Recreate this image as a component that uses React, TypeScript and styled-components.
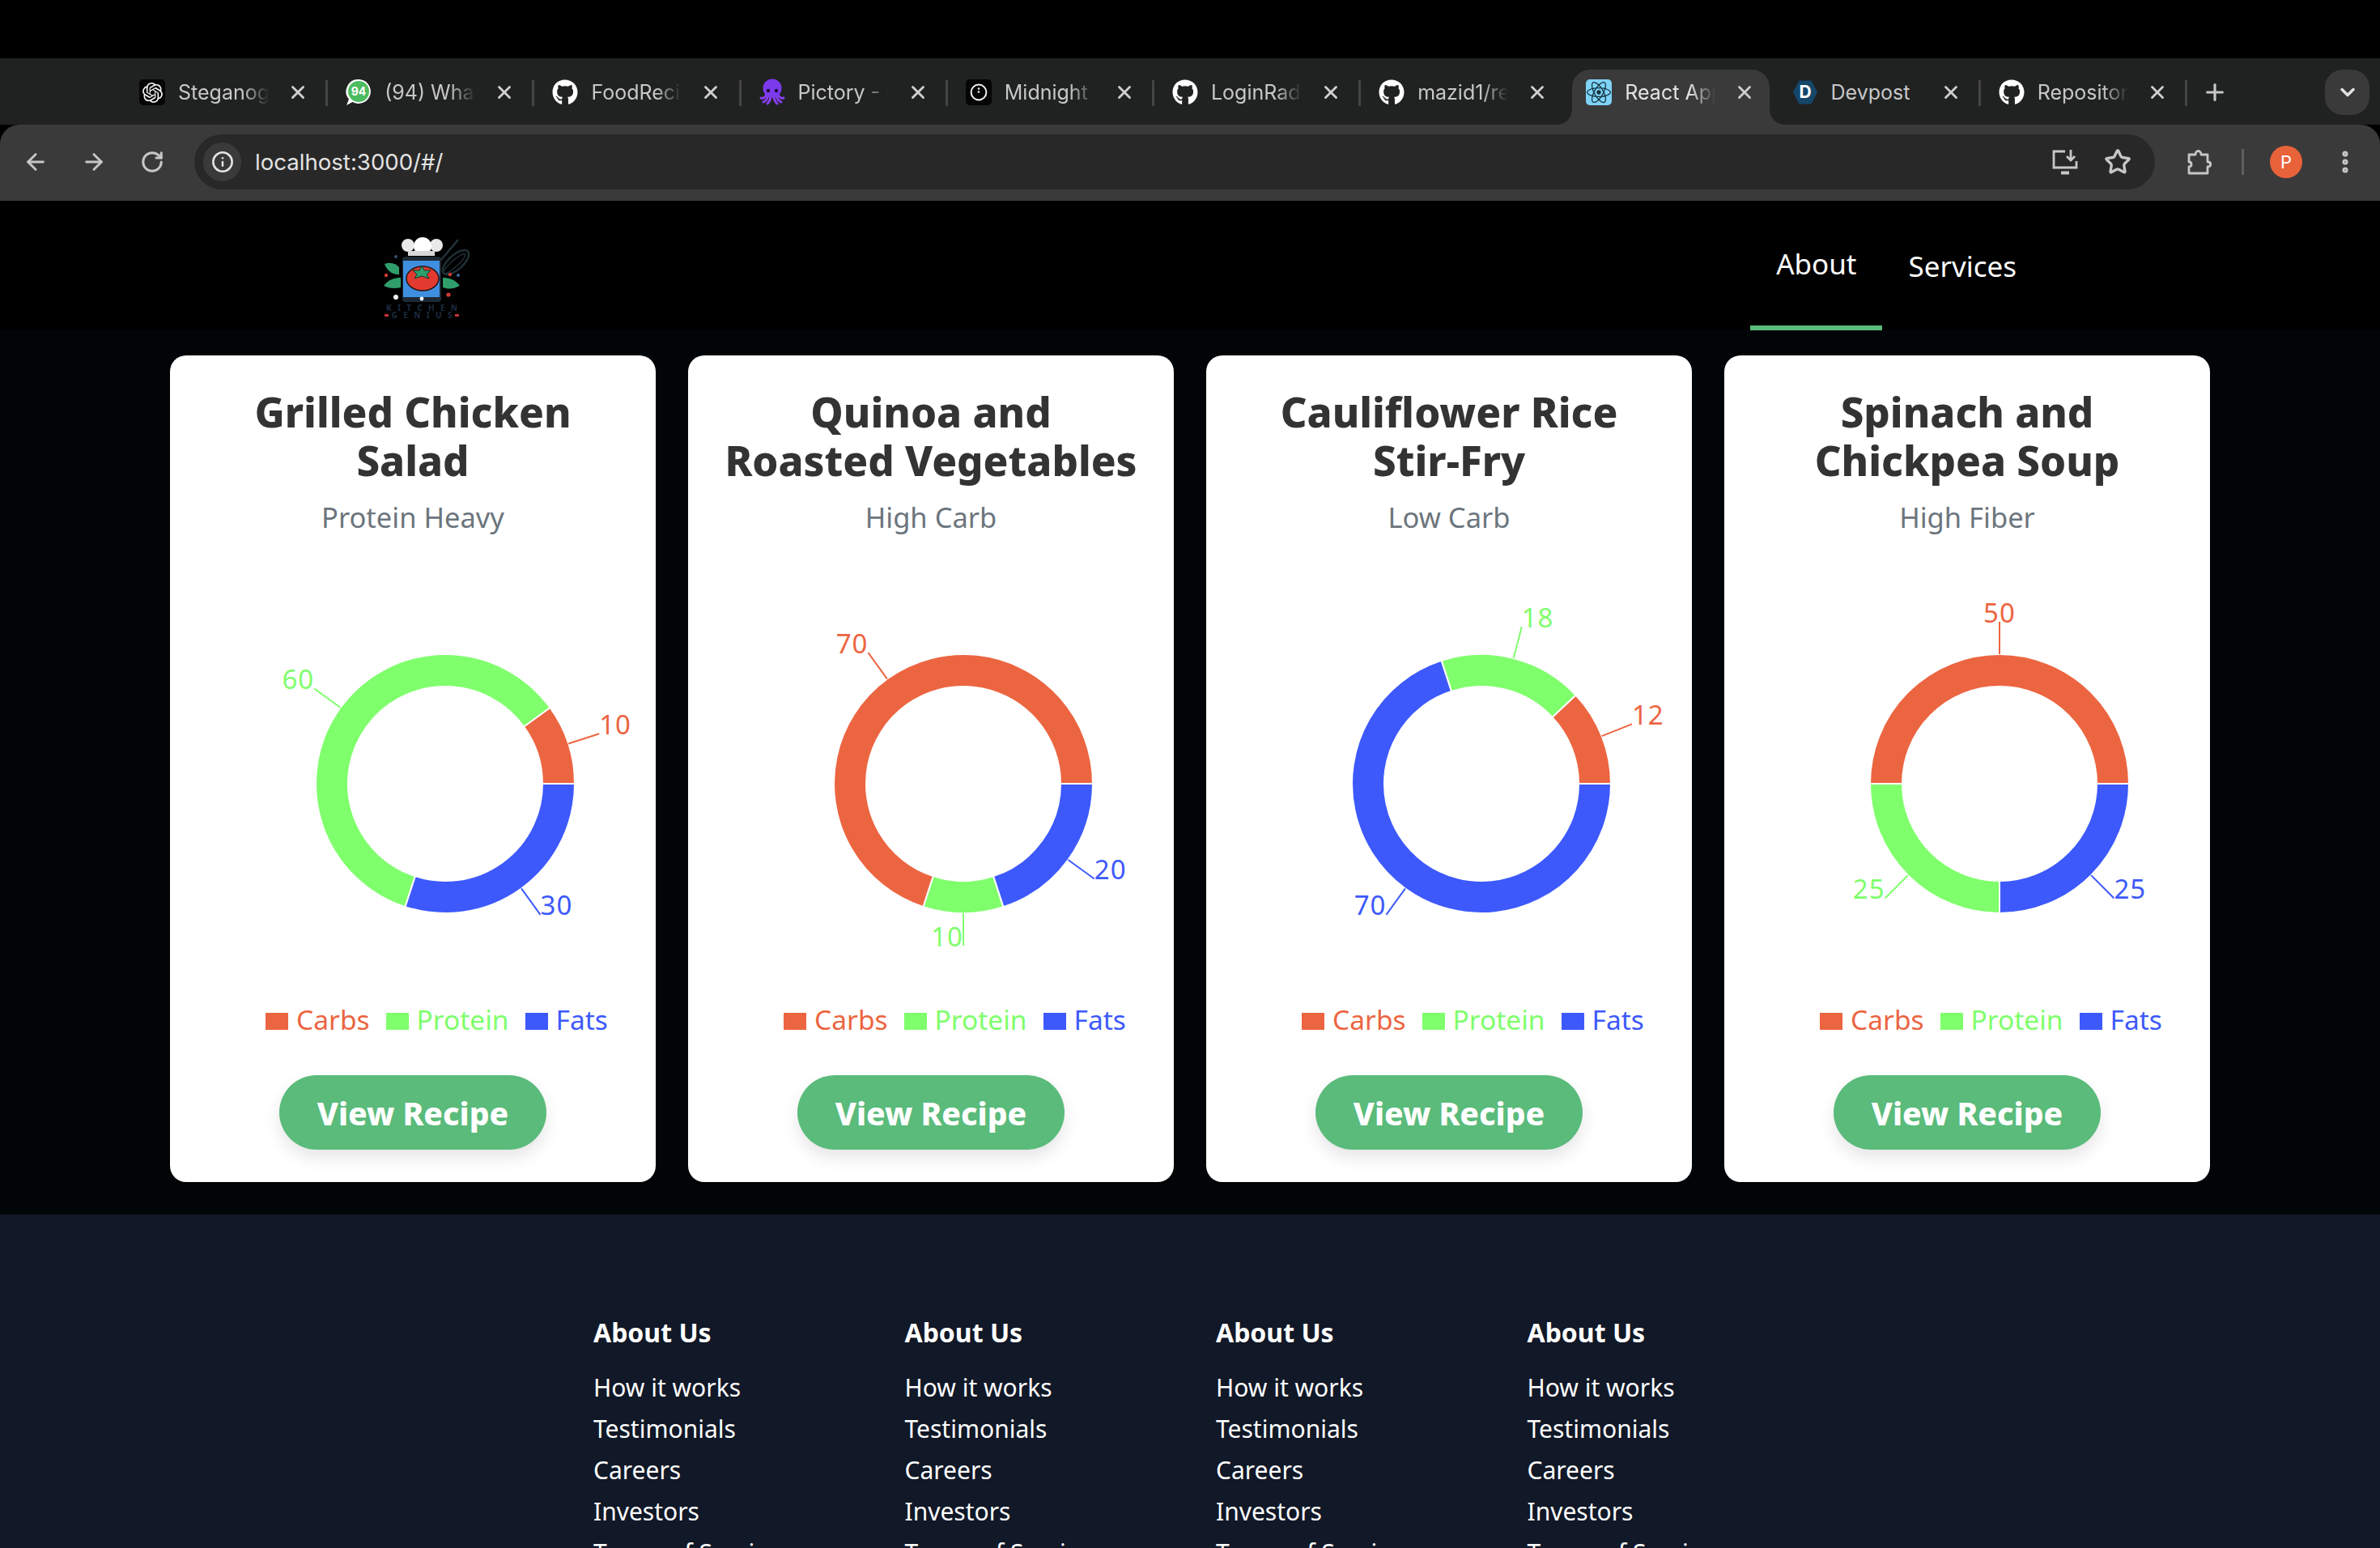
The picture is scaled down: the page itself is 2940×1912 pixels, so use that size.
import * as React from 'react';
import styled, { createGlobalStyle } from 'styled-components';
import { ArrowLeft, ArrowRight, ChevronDown, Info, MoreVertical, Plus, RotateCw, Star, X } from 'lucide-react';
import { FaGithub, FaReact } from 'react-icons/fa';
import { SiOpenai } from 'react-icons/si';

const CARBS = '#ec6541';
const PROTEIN = '#7fff6c';
const FATS = '#3d59fb';

const recipes = [
    { title: 'Grilled Chicken Salad', kind: 'Protein Heavy', carbs: 10, protein: 60, fats: 30 },
    { title: 'Quinoa and Roasted Vegetables', kind: 'High Carb', carbs: 70, protein: 10, fats: 20 },
    { title: 'Cauliflower Rice Stir-Fry', kind: 'Low Carb', carbs: 12, protein: 18, fats: 70 },
    { title: 'Spinach and Chickpea Soup', kind: 'High Fiber', carbs: 50, protein: 25, fats: 25 },
];

const footerLinks = ['How it works', 'Testimonials', 'Careers', 'Investors', 'Terms of Service'];

const WhatsappIcon = () => (
    <svg width="32" height="34" viewBox="0 0 32 34">
        <path d="M16 1a15 15 0 1 1-7.6 28L1 33l3-7.4A15 15 0 0 1 16 1z" fill="#fff" />
        <circle cx="16" cy="16" r="13" fill="#4dbb5f" />
        <WhatsappCount x="16" y="21">94</WhatsappCount>
    </svg>
);

const OctopusIcon = () => (
    <svg width="32" height="34" viewBox="0 0 32 34">
        <g fill="none" stroke="#8a3ff2" strokeWidth="3" strokeLinecap="round">
            <path d="M9 19c-1 4-4 6-7 5" />
            <path d="M11 21c-1 4-3 7-6 8" />
            <path d="M14 22c0 4-2 7-4 9" />
            <path d="M18 22c0 4 2 7 4 9" />
            <path d="M21 21c1 4 3 7 6 8" />
            <path d="M23 19c1 4 4 6 7 5" />
        </g>
        <circle cx="16" cy="12" r="11.500" fill="#7c3aed" />
        <circle cx="11" cy="15" r="2.200" fill="#1d0b3a" />
        <circle cx="21" cy="15" r="2.200" fill="#1d0b3a" />
    </svg>
);

const MidnightIcon = () => (
    <IconTile $bg="#050505">
        <svg width="22" height="22" viewBox="0 0 22 22">
            <circle cx="11" cy="11" r="9.400" fill="none" stroke="#f2f2f2" strokeWidth="2" />
            <circle cx="11" cy="6.500" r="1.300" fill="#f2f2f2" />
            <circle cx="11" cy="10.500" r="1.300" fill="#f2f2f2" />
        </svg>
    </IconTile>
);

const DevpostIcon = () => (
    <svg width="32" height="32" viewBox="0 0 32 32">
        <path d="M8.500 1.500h15L31 16l-7.500 14.500h-15L1 16z" fill="#15476b" />
        <DevpostLetter x="16" y="23">D</DevpostLetter>
    </svg>
);

const ExtensionIcon = () => (
    <svg width="32" height="34" viewBox="0 0 32 34" fill="none" stroke="#c7c7c7" strokeWidth="2.800" strokeLinejoin="round">
        <path d="M3 8h8c0-6 7-6 7 0h8v9c5 0 5 6 0 6v8H3v-8c4 0 4-6 0-6z" />
    </svg>
);

const InstallIcon = () => (
    <svg width="34" height="32" viewBox="0 0 34 32" fill="none" stroke="#c7c7c7" strokeWidth="2.800">
        <path d="M17 3H3v20h28v-8" />
        <path d="M12 29.500h10" strokeWidth="4" />
        <path d="M24 1v12M19 9l5 5 5-5" />
    </svg>
);

function IconTileOpenai() {
    return (
        <IconTile $bg="#050505">
            <SiOpenai size={25} color="#f4f4f4" />
        </IconTile>
    );
}

function IconTileReact() {
    return (
        <IconTile $bg="#7fd3f7">
            <FaReact size={30} color="#12323f" />
        </IconTile>
    );
}

const tabs: Array<{ name: string, icon: React.ReactNode, active?: boolean, noSep?: boolean, noFade?: boolean }> = [
    { name: 'Steganography', icon: <IconTileOpenai /> },
    { name: '(94) WhatsApp', icon: <WhatsappIcon /> },
    { name: 'FoodRecipes', icon: <FaGithub size={32} color="#fff" /> },
    { name: 'Pictory - Edit', icon: <OctopusIcon /> },
    { name: 'Midnight | Blog', icon: <MidnightIcon /> },
    { name: 'LoginRadius', icon: <FaGithub size={32} color="#fff" /> },
    { name: 'mazid1/react', icon: <FaGithub size={32} color="#fff" />, noSep: true },
    { name: 'React App', icon: <IconTileReact />, active: true, noSep: true },
    { name: 'Devpost', icon: <DevpostIcon />, noFade: true },
    { name: 'Repositories', icon: <FaGithub size={32} color="#fff" /> },
];

const Logo = () => (
    <LogoSvg viewBox="0 0 240 160" width="240" height="160">
        <path d="M124 62 L146 36" stroke="#23323a" strokeWidth="2.500" fill="none" />
        <ellipse cx="143" cy="64" rx="9" ry="20" transform="rotate(48 143 64)" fill="none" stroke="#1f3036" strokeWidth="2.500" />
        <ellipse cx="141" cy="66" rx="4" ry="18" transform="rotate(48 141 66)" fill="none" stroke="#1f3036" strokeWidth="1.500" />
        <circle cx="84" cy="43" r="8" fill="#e9e9e9" />
        <circle cx="119" cy="43" r="8" fill="#e9e9e9" />
        <circle cx="102" cy="44" r="11" fill="#fff" />
        <rect x="84" y="50" width="33" height="6" fill="#d8d8d8" />
        <rect x="77" y="57" width="48" height="56" rx="4" fill="#1d2a33" />
        <rect x="78" y="62" width="45" height="45" fill="#3f8fe0" />
        <ellipse cx="102" cy="84" rx="20" ry="15" fill="#e23a30" stroke="#2a1512" strokeWidth="1.500" />
        <path d="M101 68l3 6 8 0-5 5 3 5-9-3-9 3 3-5-5-5 8 0z" fill="#2f9e6b" stroke="#14342a" strokeWidth="1" />
        <circle cx="101" cy="109" r="2.400" fill="#fff" />
        <path d="M55 66c8-3 14 0 18 4v9c-8 1-15-5-18-13z" fill="#2f9e6b" />
        <path d="M54 93c6-8 14-10 21-10v12c-8 2-15 1-21-2z" fill="#2f9e6b" />
        <path d="M148 93c-6-8-14-10-21-10v12c9 3 15 1 21-2z" fill="#2f9e6b" />
        <circle cx="57" cy="80" r="2.200" fill="#d23a35" />
        <circle cx="136" cy="79" r="2.200" fill="#d23a35" />
        <circle cx="146" cy="80" r="2" fill="#3a6aa0" />
        <circle cx="69" cy="57" r="2" fill="#35506e" />
        <circle cx="69" cy="107" r="3" fill="#f2f2f2" />
        <circle cx="134" cy="104" r="2.600" fill="#d23a35" />
        <LogoWord x="101" y="124" textLength="88" lengthAdjust="spacing">KITCHEN</LogoWord>
        <LogoWord x="101" y="133" textLength="75" lengthAdjust="spacing">GENIUS</LogoWord>
        <rect x="55" y="128" width="5" height="3" fill="#c8323a" />
        <rect x="142" y="128" width="5" height="3" fill="#c8323a" />
    </LogoSvg>
);

type ChartProps = { carbs: number; protein: number; fats: number };

const CX = 340;
const CY = 304;

const polar = (r: number, deg: number) => {
    const rad = (deg * Math.PI) / 180;
    return { x: CX + r * Math.cos(rad), y: CY - r * Math.sin(rad) };
};

const Donut = ({ carbs, protein, fats }: ChartProps) => {
    const slices = [
        { value: carbs, color: CARBS },
        { value: protein, color: PROTEIN },
        { value: fats, color: FATS },
    ];
    let angle = 0;

    return (
        <ChartSvg width="600" height="546" viewBox="0 0 600 546">
            {slices.map(({ value, color }) => {
                const from = angle;
                const to = angle + value * 3.6;
                angle = to;
                const mid = (from + to) / 2;
                const large = to - from > 180 ? 1 : 0;
                const a = polar(160, from);
                const b = polar(160, to);
                const c = polar(120, to);
                const d = polar(120, from);
                const start = polar(160, mid);
                const end = polar(200, mid);
                const anchor = Math.abs(mid - 90) < 0.01 ? 'middle' : end.x > CX ? 'start' : 'end';
                return (
                    <g key={color}>
                        <path
                            d={`M${a.x} ${a.y}A160 160 0 ${large} 0 ${b.x} ${b.y}L${c.x} ${c.y}A120 120 0 ${large} 1 ${d.x} ${d.y}Z`}
                            fill={color}
                            stroke="#fff"
                            strokeWidth="2"
                        />
                        <line x1={start.x} y1={start.y} x2={end.x} y2={end.y} stroke={color} strokeWidth="2" />
                        <SliceLabel x={end.x} y={end.y - 12} fill={color} textAnchor={anchor}>{value}</SliceLabel>
                    </g>
                );
            })}
        </ChartSvg>
    );
};

const App = () => {
    return (
        <>
            <GlobalStyle />
            <Screen>
                <MacBar />
                <TabStrip>
                    {tabs.map(tab => (
                        <Tab key={tab.name} $active={tab.active} $noSep={tab.noSep}>
                            <TabIcon>{tab.icon}</TabIcon>
                            <TabTitle $active={tab.active} $noFade={tab.noFade}>{tab.name}</TabTitle>
                            <TabClose><X size={26} strokeWidth={2.6} /></TabClose>
                        </Tab>
                    ))}
                    <NewTab><Plus size={32} strokeWidth={2.4} /></NewTab>
                    <TabSearch><ChevronDown size={28} strokeWidth={3} /></TabSearch>
                </TabStrip>
                <Toolbar>
                    <NavButton><ArrowLeft size={32} strokeWidth={2.2} /></NavButton>
                    <NavButton><ArrowRight size={32} strokeWidth={2.2} /></NavButton>
                    <NavButton><RotateCw size={30} strokeWidth={2.4} /></NavButton>
                    <AddressBar>
                        <SiteChip><Info size={28} strokeWidth={2.2} /></SiteChip>
                        <Url>localhost:3000/#/</Url>
                        <AddressActions>
                            <InstallIcon />
                            <Star size={34} strokeWidth={2.4} />
                        </AddressActions>
                    </AddressBar>
                    <ExtensionSlot><ExtensionIcon /></ExtensionSlot>
                    <ToolbarDivider />
                    <Avatar>P</Avatar>
                    <MenuSlot><MoreVertical size={34} strokeWidth={3} /></MenuSlot>
                </Toolbar>

                <Header>
                    <Logo />
                    <Nav>
                        <NavItem $active>About</NavItem>
                        <NavItem>Services</NavItem>
                    </Nav>
                </Header>

                <Main>
                    {recipes.map(recipe => (
                        <Card key={recipe.title}>
                            <Title>{recipe.title}</Title>
                            <Kind>{recipe.kind}</Kind>
                            <Donut carbs={recipe.carbs} protein={recipe.protein} fats={recipe.fats} />
                            <Legend>
                                <LegendItem $color={CARBS}><Swatch $color={CARBS} />Carbs</LegendItem>
                                <LegendItem $color={PROTEIN}><Swatch $color={PROTEIN} />Protein</LegendItem>
                                <LegendItem $color={FATS}><Swatch $color={FATS} />Fats</LegendItem>
                            </Legend>
                            <ViewButton>View Recipe</ViewButton>
                        </Card>
                    ))}
                </Main>

                <Footer>
                    {[0, 1, 2, 3].map(column => (
                        <FooterColumn key={column}>
                            <FooterHeading>About Us</FooterHeading>
                            {footerLinks.map(link => <FooterLink key={link}>{link}</FooterLink>)}
                        </FooterColumn>
                    ))}
                </Footer>
            </Screen>
        </>
    );
};

export default App;

const GlobalStyle = createGlobalStyle`
  html, body {
    margin: 0;
    height: 1912px;
    overflow: hidden;
    background: #000;
  }
  * { box-sizing: border-box; }
`;

const Screen = styled.div`
  width: 2940px;
  height: 1912px;
  overflow: hidden;
  font-family: "Noto Sans", "Open Sans", sans-serif;
`;

const MacBar = styled.div`
  height: 72px;
  background: #000;
`;

const TabStrip = styled.div`
  height: 82px;
  background: #202222;
  display: flex;
  align-items: flex-end;
  padding-left: 150px;
  font-family: Inter, "Liberation Sans", sans-serif;
`;

const Tab = styled.div<{ $active?: boolean; $noSep?: boolean }>`
  position: relative;
  width: ${p => (p.$active ? '243.200px' : '255.200px')};
  height: 68px;
  margin: ${p => (p.$active ? '0 6px' : '0')};
  padding: 0 0 12px ${p => (p.$active ? '17px' : '22px')};
  display: flex;
  align-items: center;
  flex-shrink: 0;
  border-radius: 22px 22px 0 0;
  background: ${p => (p.$active ? '#3a3a3a' : 'transparent')};

  &::after {
    content: '';
    display: ${p => (p.$noSep ? 'none' : 'block')};
    position: absolute;
    right: 0;
    top: 13px;
    width: 3px;
    height: 32px;
    background: #444;
  }
  ${p => p.$active && `
    &::before {
      content: '';
      position: absolute;
      left: -18px;
      right: -18px;
      bottom: 0;
      height: 18px;
      background:
        radial-gradient(circle at 0 0, #202222 17.500px, #3a3a3a 18px) left bottom / 18px 18px no-repeat,
        radial-gradient(circle at 100% 0, #202222 17.500px, #3a3a3a 18px) right bottom / 18px 18px no-repeat;
    }
  `}
`;

const TabIcon = styled.div`
  width: 32px;
  height: 34px;
  display: flex;
  align-items: center;
  justify-content: center;
  flex-shrink: 0;
`;

const IconTile = styled.div<{ $bg: string }>`
  width: 32px;
  height: 32px;
  border-radius: 5px;
  background: ${p => p.$bg};
  display: flex;
  align-items: center;
  justify-content: center;
`;

const TabTitle = styled.div<{ $active?: boolean; $noFade?: boolean }>`
  width: 112px;
  margin-left: 16px;
  white-space: nowrap;
  overflow: hidden;
  font-size: 25px;
  color: ${p => (p.$active ? '#e3e3e3' : '#c7c7c7')};
  ${p => !p.$noFade && `
    mask-image: linear-gradient(to right, #000 72%, transparent 100%);
  `}
`;

const TabClose = styled.div`
  margin-left: 23px;
  display: flex;
  color: #d0d0d0;
`;

const NewTab = styled.div`
  margin: 0 0 24px 18px;
  display: flex;
  color: #c7c7c7;
`;

const TabSearch = styled.div`
  width: 55px;
  height: 56px;
  margin: 0 13px 12px auto;
  border-radius: 22px;
  background: #3a3a3a;
  color: #e3e3e3;
  display: flex;
  align-items: center;
  justify-content: center;
`;

const Toolbar = styled.div`
  height: 94px;
  background: #3a3a3a;
  border-radius: 24px 24px 0 0;
  display: flex;
  align-items: center;
  padding: 0 0 2px 8px;
  color: #c7c7c7;
  font-family: Inter, "Liberation Sans", sans-serif;
`;

const NavButton = styled.div`
  width: 72px;
  display: flex;
  justify-content: center;
`;

const AddressBar = styled.div`
  width: 2422px;
  height: 68px;
  margin-left: 16px;
  padding: 0 29px 0 11px;
  border-radius: 34px;
  background: #282828;
  display: flex;
  align-items: center;
`;

const SiteChip = styled.div`
  width: 47px;
  height: 48px;
  border-radius: 24px;
  background: #3a3a3a;
  color: #e3e3e3;
  display: flex;
  align-items: center;
  justify-content: center;
`;

const Url = styled.div`
  margin-left: 17px;
  font-size: 27.600px;
  color: #e3e3e3;
`;

const AddressActions = styled.div`
  margin-left: auto;
  display: flex;
  align-items: center;
  gap: 31px;
`;

const ExtensionSlot = styled.div`
  margin-left: 39px;
  display: flex;
`;

const ToolbarDivider = styled.div`
  width: 3px;
  height: 32px;
  margin-left: 36px;
  background: #5e5e5e;
`;

const Avatar = styled.div`
  width: 40px;
  height: 40px;
  margin-left: 32px;
  border-radius: 50%;
  background: #e8623a;
  color: #fff;
  font-size: 22px;
  display: flex;
  align-items: center;
  justify-content: center;
`;

const MenuSlot = styled.div`
  margin-left: 36px;
  display: flex;
`;

const Header = styled.header`
  height: 160px;
  background: #000;
  display: flex;
  justify-content: space-between;
  padding: 12px 417px 0 420px;
`;

const LogoSvg = styled.svg`
  display: block;
`;

const LogoWord = styled.text`
  font-size: 10px;
  font-weight: 700;
  text-anchor: middle;
  fill: #1b2c40;
`;

const WhatsappCount = styled.text`
  font-size: 14px;
  font-weight: 700;
  text-anchor: middle;
  fill: #fff;
`;

const DevpostLetter = styled.text`
  font-size: 21px;
  font-weight: 700;
  text-anchor: middle;
  fill: #fff;
`;

const Nav = styled.nav`
  display: flex;
  height: 148px;
`;

const NavItem = styled.div<{ $active?: boolean }>`
  padding: 0 32px 12px;
  display: flex;
  align-items: center;
  font-size: 35px;
  color: #fff;
  border-bottom: ${p => (p.$active ? '6px solid #5abb7b' : 'none')};
`;

const Main = styled.main`
  background: #020507;
  padding: 31px 0 40px;
  display: flex;
  justify-content: center;
  gap: 40px;
`;

const Card = styled.article`
  width: 600px;
  height: 1021px;
  padding-top: 39px;
  background: #fff;
  border-radius: 20px;
  display: flex;
  flex-direction: column;
  align-items: center;
`;

const Title = styled.h3`
  margin: 0;
  padding: 0 44px;
  font-size: 51px;
  line-height: 60px;
  font-weight: 800;
  color: #333;
  text-align: center;
`;

const Kind = styled.p`
  margin: 16px 0 0;
  font-size: 34.500px;
  line-height: 50px;
  color: #6c757d;
`;

const ChartSvg = styled.svg`
  display: block;
  flex-shrink: 0;
`;

const SliceLabel = styled.text`
  font-size: 33px;
  font-weight: 400;
  letter-spacing: 1px;
  dominant-baseline: central;
`;

const Legend = styled.div`
  margin-top: 24px;
  padding-left: 59px;
  display: flex;
  gap: 20px;
`;

const LegendItem = styled.div<{ $color: string }>`
  display: flex;
  align-items: center;
  gap: 10px;
  font-size: 33.500px;
  line-height: 50px;
  color: ${p => p.$color};
`;

const Swatch = styled.span<{ $color: string }>`
  width: 28px;
  height: 21px;
  margin-top: 4px;
  background: ${p => p.$color};
`;

const ViewButton = styled.button`
  width: 330px;
  height: 92px;
  margin-top: 44px;
  border: none;
  border-radius: 46px;
  background: #5abb7b;
  color: #fff;
  font-family: inherit;
  font-size: 39px;
  font-weight: 800;
  box-shadow: 0 10px 20px rgba(0, 0, 0, 0.1);
`;

const Footer = styled.footer`
  height: 412px;
  background: #111827;
  padding: 122px 0 0 733px;
  display: grid;
  grid-template-columns: repeat(4, 384.500px);
  align-content: start;
`;

const FooterColumn = styled.div`
  display: flex;
  flex-direction: column;
`;

const FooterHeading = styled.h4`
  margin: 0 0 18px;
  font-size: 32px;
  line-height: 48px;
  font-weight: 700;
  color: #fff;
`;

const FooterLink = styled.a`
  font-size: 30px;
  line-height: 51px;
  color: #fff;
`;
